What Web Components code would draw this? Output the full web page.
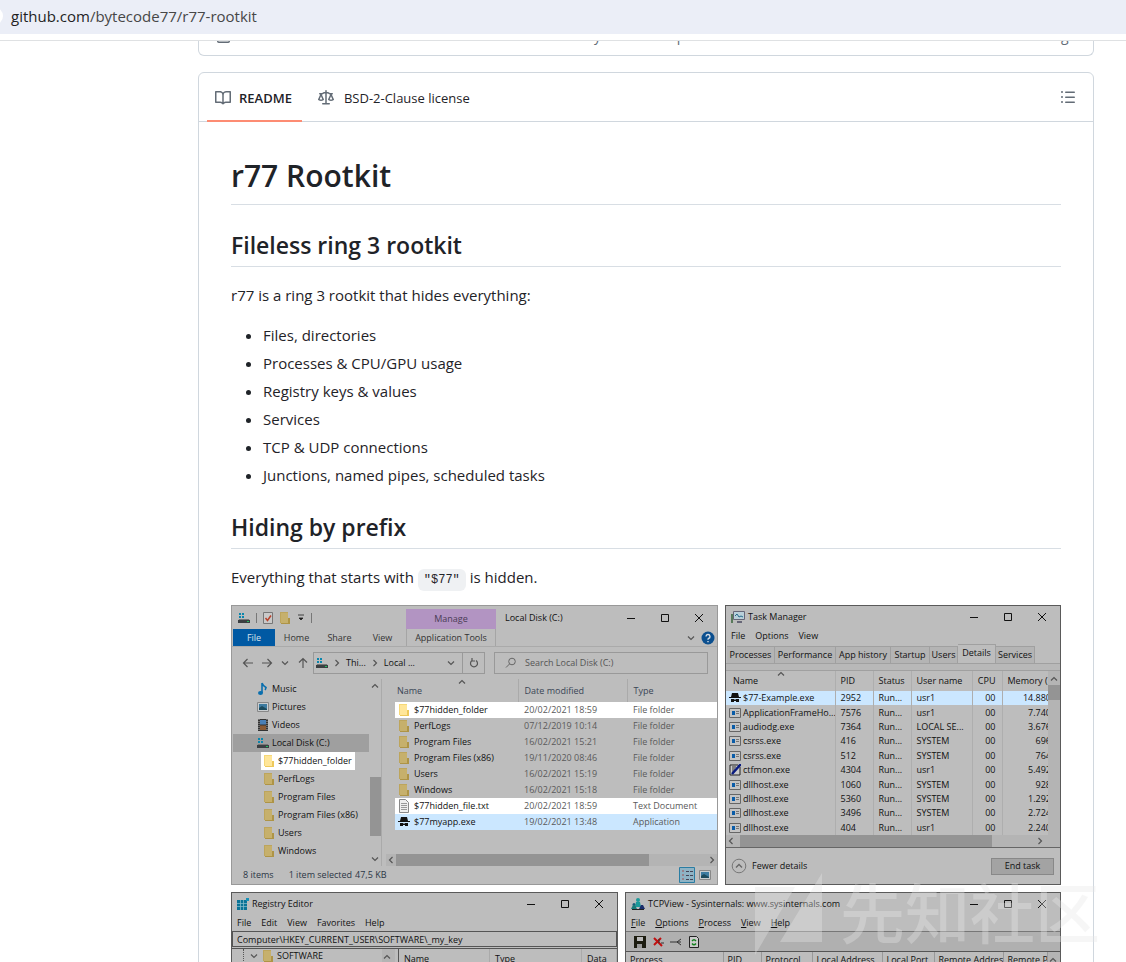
<!DOCTYPE html>
<html lang="en">
<head>
<meta charset="utf-8">
<title>bytecode77/r77-rootkit</title>
<style>
  body { margin: 0; background: #fff; color: #1f2328; font-family: "Open Sans", "Noto Sans", sans-serif; }
</style>
</head>
<body>
<app-page></app-page>
<script>
const BASE = `
  *, *::before { box-sizing: border-box; }
  button, input { font: inherit; color: inherit; background: none; border: 0; padding: 0; margin: 0; min-width: 0; }
  button { cursor: pointer; white-space: nowrap; }
  a { color: inherit; text-decoration: none; }
  ui-icon { flex: none; }
  table { border-collapse: collapse; table-layout: fixed; }
  th, td { padding: 0; text-align: left; font-weight: 400; white-space: nowrap; overflow: hidden; }
`;
function define(name, css, html) {
  const tpl = document.createElement('template');
  tpl.innerHTML = `<style>${BASE}${css}</style>${html}`;
  customElements.define(name, class extends HTMLElement {
    constructor() {
      super();
      this.attachShadow({ mode: 'open' }).append(tpl.content.cloneNode(true));
    }
  });
}

const chev = d => `<path d="${d}" fill="none" stroke="#555" stroke-width="1.2"/>`;
const ICONS = {
  book: ['0 0 16 16', '<path fill="#636c76" d="M0 1.75A.75.75 0 0 1 .75 1h4.253c1.227 0 2.317.59 3 1.501A3.743 3.743 0 0 1 11.006 1h4.245a.75.75 0 0 1 .75.75v10.5a.75.75 0 0 1-.75.75h-4.507a2.25 2.25 0 0 0-1.591.659l-.622.621a.75.75 0 0 1-1.06 0l-.622-.621A2.25 2.25 0 0 0 5.258 13H.75a.75.75 0 0 1-.75-.75Zm7.251 10.324.004-5.073-.002-2.253A2.25 2.25 0 0 0 5.003 2.5H1.5v9h3.757a3.75 3.75 0 0 1 1.994.574ZM8.755 4.75l-.004 7.322a3.752 3.752 0 0 1 1.992-.572H14.5v-9h-3.495a2.25 2.25 0 0 0-2.25 2.25Z"/>'],
  law: ['0 0 16 16', '<path fill="#636c76" d="M8.75.75V2h.985c.304 0 .603.08.867.231l1.29.736c.038.022.08.033.124.033h2.234a.75.75 0 0 1 0 1.5h-.427l2.111 4.692a.75.75 0 0 1-.154.838l-.53-.53.529.531-.001.002-.002.002-.006.006-.006.005-.01.01-.045.04c-.21.176-.441.327-.686.45C14.556 10.78 13.88 11 13 11a4.498 4.498 0 0 1-2.023-.454 3.544 3.544 0 0 1-.686-.45l-.045-.04-.016-.015-.006-.006-.004-.004v-.001a.75.75 0 0 1-.154-.838L12.178 4.5h-.162c-.305 0-.604-.079-.868-.231l-1.29-.736a.245.245 0 0 0-.124-.033H8.75V13h2.5a.75.75 0 0 1 0 1.5h-6.5a.75.75 0 0 1 0-1.5h2.5V3.5h-.984a.245.245 0 0 0-.124.033l-1.289.737c-.265.15-.564.23-.869.23h-.162l2.112 4.692a.75.75 0 0 1-.154.838l-.53-.53.529.531-.001.002-.002.002-.006.006-.016.015-.045.04c-.21.176-.441.327-.686.45C4.556 10.78 3.88 11 3 11a4.498 4.498 0 0 1-2.023-.454 3.544 3.544 0 0 1-.686-.45l-.045-.04-.016-.015-.006-.006-.004-.004v-.001a.75.75 0 0 1-.154-.838L2.178 4.5H1.75a.75.75 0 0 1 0-1.5h2.234a.249.249 0 0 0 .125-.033l1.288-.737c.265-.15.564-.23.869-.23h.984V.75a.75.75 0 0 1 1.5 0Zm2.945 8.477c.285.135.718.273 1.305.273s1.02-.138 1.305-.273L13 6.327Zm-10 0c.285.135.718.273 1.305.273s1.02-.138 1.305-.273L3 6.327Z"/>'],
  list: ['0 0 16 16', '<path fill="#636c76" d="M5.75 2.5h8.5a.75.75 0 0 1 0 1.5h-8.5a.75.75 0 0 1 0-1.5Zm0 5h8.5a.75.75 0 0 1 0 1.5h-8.5a.75.75 0 0 1 0-1.5Zm0 5h8.5a.75.75 0 0 1 0 1.5h-8.5a.75.75 0 0 1 0-1.5ZM2 14a1 1 0 1 1 0-2 1 1 0 0 1 0 2Zm1-6a1 1 0 1 1-2 0 1 1 0 0 1 2 0ZM2 4a1 1 0 1 1 0-2 1 1 0 0 1 0 2Z"/>'],
  doc: ['0 0 16 16', '<path fill="#636c76" d="M2 1.750C2 .784 2.784 0 3.750 0h6.586c.464 0 .909.184 1.237.513l2.914 2.914c.329.328.513.773.513 1.237v9.586A1.75 1.75 0 0 1 13.25 16h-9.500A1.750 1.750 0 0 1 2 14.250Zm1.750-.25a.25.25 0 0 0-.25.25v12.500c0 .138.112.25.25.25h9.500a.25.25 0 0 0 .25-.25V6h-2.750A1.750 1.750 0 0 1 9 4.250V1.500Z"/>'],
  folder: ['0 0 12 14', '<path d="M1 1h8v11H1z" fill="#bda55c"/><path d="M2 2h7v10H2z" fill="#c6b06c"/><path d="M9 7h2v6H2v-1h7z" fill="#ae9446"/>'],
  folderlit: ['0 0 12 14', '<path d="M1 1h8v11H1z" fill="#f6d878"/><path d="M2 2h7v10H2z" fill="#ffe699"/><path d="M9 7h2v6H2v-1h7z" fill="#eec95a"/>'],
  disk: ['0 0 12 12', '<path d="M1 1h2v2H1zM4 1h2v2H4zM1 4h2v2H1zM4 4h2v2H4z" fill="#0a86ad"/><path d="M1 7h10l1 4H0z" fill="#777"/><path d="M0 8h12v3H0z" fill="#3b3f42"/><path d="M9 9h2v1H9z" fill="#24c060"/>'],
  check: ['0 0 10 12', '<path d="M.5.500h9v11h-9z" fill="#c9c9c9" stroke="#777"/><path d="M2.500 6l2 2.500L8 3.500" fill="none" stroke="#b8422c" stroke-width="1.500"/>'],
  qmenu: ['0 0 8 8', '<path d="M1 1h6M2 4h4L4 6z" stroke="#222" fill="#222" stroke-width=".8"/>'],
  min: ['0 0 10 10', '<path d="M1 5.500h8" stroke="#111"/>'],
  max: ['0 0 10 10', '<path d="M1.500 1.500h7v7h-7z" stroke="#111" fill="none"/>'],
  close: ['0 0 10 10', '<path d="M1 1l8 8M9 1l-8 8" stroke="#111"/>'],
  left: ['0 0 12 12', chev('M11 6H2M5.500 2L1.500 6l4 4')],
  right: ['0 0 12 12', chev('M1 6h9M6.500 2l4 4-4 4')],
  up: ['0 0 12 12', chev('M6 11V2M2 5.500l4-4 4 4')],
  cdown: ['0 0 10 10', chev('M2 3.500l3 3 3-3')],
  cup: ['0 0 10 10', chev('M2 6.500l3-3 3 3')],
  cright: ['0 0 10 10', chev('M3.500 2l3 3-3 3')],
  cleft: ['0 0 10 10', chev('M6.500 2l-3 3 3 3')],
  refresh: ['0 0 12 12', chev('M4 3.500a3.500 3.500 0 1 0 4 0M4 1v3h3')],
  search: ['0 0 12 12', '<circle cx="7" cy="4.500" r="3.300" fill="none" stroke="#666"/><path d="M4.500 7L1 10.500" stroke="#666"/>'],
  help: ['0 0 14 14', '<circle cx="7" cy="7" r="6.500" fill="#0b4f8f"/><path d="M5 5.500a2 2 0 1 1 2.500 2Q7 7.700 7 8.800M7 10v1.300" fill="none" stroke="#d5dde5" stroke-width="1.400"/>'],
  music: ['0 0 12 14', '<path d="M5 1v10M5 1q1 3 4 4.500-.5 2-1 2.500" fill="none" stroke="#0a6fae" stroke-width="1.600"/><ellipse cx="3.500" cy="11" rx="2.500" ry="2" fill="#0a6fae"/>'],
  picture: ['0 0 12 10', '<path d="M.5.500h11v9H.5z" fill="#c8cdd0" stroke="#888"/><path d="M2 2h8v6H2z" fill="#3d7ba0"/><path d="M2 6l3-2 5 3v1H2z" fill="#1c4a5c"/>'],
  video: ['0 0 12 12', '<path d="M1 0h10v12H1z" fill="#333"/><path d="M3 1h6v4.500H3z" fill="#4a7fb5"/><path d="M3 6.500h6V11H3z" fill="#8a5a34"/><path d="M2 0v12M10 0v12" stroke="#aaa" stroke-dasharray="1"/>'],
  text: ['0 0 12 14', '<path d="M1.500.500h6l3 3v10h-9z" fill="#eee" stroke="#888"/><path d="M3 4.500h6M3 6.500h6M3 8.500h6M3 10.500h6" stroke="#999"/>'],
  spy: ['0 0 12 10', '<path d="M3 0h6l1 4h2v1H0V4h2zM2 6h3.500v1h1V6H10v3H7V8H5v1H2z" fill="#111"/>'],
  exe: ['0 0 12 10', '<path d="M.5.500h11v9H.5z" fill="#c4c4c4" stroke="#666"/><path d="M3 3h3v4H3z" fill="#0a5ca8"/><path d="M7 3.500h3M7 5.500h3" stroke="#777"/>'],
  pen: ['0 0 12 12', '<path d="M1 1h8l2 2v8H1z" fill="#ccc" stroke="#222"/><path d="M3 3h4M3 5h3M3 7h2" stroke="#333"/><path d="M12 0L3 10" stroke="#0a1b80" stroke-width="2.500"/>'],
  details: ['0 0 16 16', '<path d="M.5.500h15v15H.5z" fill="#8fb3c4" stroke="#2a7da3"/><path d="M4 3v10" stroke="#a05050" stroke-dasharray="2"/><path d="M7 4.500h3M11 4.500h3M7 8.500h3M11 8.500h3M7 12.500h3M11 12.500h3" stroke="#445"/>'],
  monitor: ['0 0 14 12', '<path d="M2.500.500h11v8h-11z" fill="#b9d0da" stroke="#667"/><path d="M4 5l2-2 2 3 2-1 2 1" fill="none" stroke="#256a8a"/><path d="M6 10h5v2H6z" fill="#667"/><path d="M0 3h2v9H0z" fill="#587a5a"/>'],
  circleup: ['0 0 16 16', '<circle cx="8" cy="8" r="6.800" fill="none" stroke="#777"/><path d="M5 9.500l3-3 3 3" fill="none" stroke="#666" stroke-width="1.300"/>'],
  reg: ['0 0 12 12', '<path d="M0 2h10v10H0z" fill="#0a7396"/><path d="M3.500 2v10M6.500 2v10M0 5.500h10M0 8.500h10" stroke="#8cc0cf" stroke-width=".7"/><path d="M9 0h3v3H9z" fill="#1592b8"/>'],
  tcp: ['0 0 14 12', '<circle cx="7" cy="2" r="2" fill="#1c9a9a"/><path d="M5 4h4l1 5H4z" fill="#1c9a9a"/><circle cx="3" cy="6.500" r="1.500" fill="#1c5a7a"/><path d="M0 11l2-4h2l2 4z" fill="#1c7a7a"/><path d="M8 11l2-4h2l2 4z" fill="#1b2e6b"/><path d="M1 11h12v1H1z" fill="#222"/>'],
  save: ['0 0 12 12', '<path d="M0 0h12v12H0z" fill="#1c1c10"/><path d="M3 1h6v4H3z" fill="#bbb"/><path d="M3 8h5v4H3z" fill="#999"/>'],
  kill: ['0 0 12 12', '<path d="M2 2l8 8M9 2L2 9" stroke="#c01010" stroke-width="2"/><path d="M7 3v4M9 7h3" stroke="#333"/>'],
  conn: ['0 0 12 12', '<path d="M0 6h7M11 3L7 6l4 3M11 6H7" stroke="#333" fill="none"/>'],
  reload: ['0 0 12 12', '<path d="M1.500.500h7l2 2v9h-9z" fill="#ccc" stroke="#222"/><path d="M4 5q2-2.500 4 0M8 7.500q-2 2.500-4 0" fill="none" stroke="#11801c" stroke-width="1.400"/>'],
};
customElements.define('ui-icon', class extends HTMLElement {
  constructor() {
    super();
    this.attachShadow({ mode: 'open' });
  }
  connectedCallback() {
    const [box, body] = ICONS[this.getAttribute('name')];
    const [, , w, h] = box.split(' ').map(Number);
    this.shadowRoot.innerHTML = `<style>:host{display:block;width:${w}px;height:${h}px}svg{display:block;width:100%;height:100%}</style><svg viewBox="${box}" aria-hidden="true">${body}</svg>`;
  }
});
const icon = n => `<ui-icon name="${n}"></ui-icon>`;

/* ---------- browser and repository parts ---------- */
define('url-bar', `
  :host { display: block; flex: none; border-bottom: 1px solid #dfe1e3; padding-bottom: 6px; }
  .bar { display: flex; align-items: center; height: 34px; background: #ebeef7; font-size: 15px; line-height: 20px; color: #474747; overflow: hidden; padding-bottom: 2px; }
  .bar::before { content: ""; width: 18px; height: 18px; margin-left: -15px; margin-right: 8px; border-radius: 9px; background: #fff; }
  b { font-weight: 400; color: #1f1f1f; }
`, `<div class="bar"><span><b>github.com</b>/bytecode77/r77-rootkit</span></div>`);

define('file-row', `
  :host { display: flex; align-items: flex-end; height: 15px; overflow: hidden; border: 1px solid #d0d7de; border-top: 0; border-radius: 0 0 6px 6px; }
  .row { display: grid; grid-template-columns: 326px 1fr 136px; align-items: center; width: 100%; height: 40px; padding: 0 16px; font-size: 14px; color: #636c76; }
  .row > :last-child { text-align: right; }
`, `<div class="row">${icon('doc')}<a href="#">Directory structure updated</a><span>2 months ago</span></div>`);

define('readme-tabs', `
  :host { display: flex; align-items: center; height: 49px; padding: 0 17px 0 8px; border-bottom: 1px solid #d0d7de; font-size: 13px; }
  a { display: flex; align-items: center; gap: 8px; height: 49px; padding: 0 10px 0 8px; margin-bottom: -1px; }
  a + a { gap: 10px; margin-left: 8px; }
  .on { font-weight: 600; border-bottom: 2px solid #fd8c73; padding-top: 2px; }
  .toc { margin-left: auto; }
`, `<a class="on" href="#readme">${icon('book')}README</a><a href="#license">${icon('law')}BSD-2-Clause license</a><button class="toc" aria-label="Outline">${icon('list')}</button>`);

define('readme-body', `
  :host { display: block; padding: 32px; font-size: 15px; line-height: 24px; }
  h1, h2 { margin: 0 0 16px; font-weight: 600; border-bottom: 1px solid #d8dee4; }
  h1 { font-size: 30px; line-height: 43px; padding-bottom: 7px; margin-bottom: 24px; }
  h2 { font-size: 23px; line-height: 32px; padding-bottom: 5px; }
  p { margin: 0 0 16px; }
  ul { margin: 0 0 24px; padding-left: 32px; }
  li + li { margin-top: 4px; }
  code { font: 12px/14px "Liberation Mono", monospace; padding: 4px 6px; background: #eff1f3; border-radius: 6px; }
  .shots { display: grid; gap: 7px; margin-bottom: 7px; }
  .one { grid-template-columns: 487fr 336fr; }
  .two { grid-template-columns: 387fr 436fr; }
`, `
  <h1>r77 Rootkit</h1>
  <h2>Fileless ring 3 rootkit</h2>
  <p>r77 is a ring 3 rootkit that hides everything:</p>
  <ul><li>Files, directories</li><li>Processes &amp; CPU/GPU usage</li><li>Registry keys &amp; values</li><li>Services</li><li>TCP &amp; UDP connections</li><li>Junctions, named pipes, scheduled tasks</li></ul>
  <h2>Hiding by prefix</h2>
  <p>Everything that starts with <code>"$77"</code> is hidden.</p>
  <div class="shots one"><explorer-window></explorer-window><task-window></task-window></div>
  <div class="shots two"><registry-window></registry-window><tcp-window></tcp-window></div>`);

/* ---------- desktop windows ---------- */
define('win-controls', `
  :host { display: flex; flex: none; margin-left: auto; padding-right: 1px; }
  button { width: 34px; height: 20px; display: grid; place-items: center; }
`, `<button aria-label="Minimize">${icon('min')}</button><button aria-label="Maximize">${icon('max')}</button><button aria-label="Close">${icon('close')}</button>`);

const WIN = `
  :host { display: block; min-width: 0; overflow: hidden; border: 1px solid #5a5a5a; background: #bdbdbd; color: #111; font-size: 9px; line-height: 12px; }
  .menu { display: flex; align-items: center; height: 16px; gap: 10px; padding-left: 5px; }
  .thumb { background: #949494; }
  .c { display: flex; align-items: center; gap: 4px; }
  .sort { position: relative; }
  .sort ui-icon { position: absolute; top: -3px; left: 50%; }
`;
define('win-title', `
  :host { display: flex; align-items: center; height: 22px; gap: 3px; padding-left: 5px; }
`, `<slot></slot><win-controls></win-controls>`);

const tree = [['music', 'Music'], ['picture', 'Pictures'], ['video', 'Videos'], ['disk', 'Local Disk (C:)', 'sel'], ['folderlit', '$77hidden_folder', 'sub lit'], ['folder', 'PerfLogs', 'sub'], ['folder', 'Program Files', 'sub'], ['folder', 'Program Files (x86)', 'sub'], ['folder', 'Users', 'sub'], ['folder', 'Windows', 'sub']];
const files = [['folderlit', '$77hidden_folder', '20/02/2021 18:59', 'File folder', 'lit'], ['folder', 'PerfLogs', '07/12/2019 10:14', 'File folder'], ['folder', 'Program Files', '16/02/2021 15:21', 'File folder'], ['folder', 'Program Files (x86)', '19/11/2020 08:46', 'File folder'], ['folder', 'Users', '16/02/2021 15:19', 'File folder'], ['folder', 'Windows', '16/02/2021 15:18', 'File folder'], ['text', '$77hidden_file.txt', '20/02/2021 18:59', 'Text Document', 'lit'], ['spy', '$77myapp.exe', '19/02/2021 13:48', 'Application', 'blue']];
define('explorer-window', WIN + `
  :host { border-color: #999; }
  .head { display: flex; height: 23px; align-items: center; }
  .qa { width: 174px; display: flex; align-items: center; gap: 6px; padding: 0 6px; }
  .qa i { width: 1px; height: 10px; background: #777; }
  .manage { width: 90px; align-self: stretch; margin-top: 3px; background: #b294c2; color: #4a3b55; display: grid; place-items: center; }
  .head > span { margin-left: 9px; }
  .ribbon { display: flex; align-items: stretch; height: 18px; border-bottom: 1px solid #aaa; color: #333; }
  .ribbon button { width: 43px; }
  .ribbon .file { width: 42px; background: #0059a3; color: #d8e2ec; margin-left: 1px; }
  .ribbon .tools { width: 90px; margin-left: 2px; border: solid #a5a5a5; border-width: 0 1px; }
  .ribbon .end { margin-left: auto; display: flex; align-items: center; gap: 5px; padding-right: 2px; }
  .addr { display: flex; align-items: center; height: 32px; padding: 0 9px 0 10px; }
  .nav { display: flex; align-items: center; width: 71px; gap: 7px; }
  .path { display: flex; align-items: center; width: 172px; height: 22px; border: 1px solid #999; padding-left: 2px; gap: 4px; }
  .path .re { width: 22px; height: 20px; border-left: 1px solid #999; display: grid; place-items: center; }
  .path .drop { margin-left: auto; margin-right: 2px; }
  label.box { display: flex; align-items: center; flex: 1; margin-left: 9px; height: 22px; border: 1px solid #999; padding-left: 10px; gap: 8px; min-width: 0; }
  input { flex: 1; color: #555; }
  input::placeholder { color: #555; opacity: 1; }
  .panes { display: flex; height: 187px; overflow: hidden; }
  .tree { width: 136px; margin: 0 0 0 1px; flex: none; list-style: none; padding: 1px 0 0; overflow: hidden; }
  .tree li { display: flex; align-items: center; height: 18px; padding-left: 24px; gap: 3px; }
  .tree li.sub { padding-left: 30px; }
  .tree li.sel { background: #9f9f9f; }
  .tree li.lit { background: #fff; margin-left: 28px; width: 94px; padding-left: 2px; }
  .vs { width: 13px; display: flex; flex-direction: column; align-items: center; border-right: 1px solid #aaa; padding: 2px 0; flex: none; }
  .vs .thumb { width: 11px; height: 59px; margin-top: auto; margin-bottom: 18px; }
  .list { flex: 1; min-width: 0; display: flex; flex-direction: column; padding-left: 4px; }
  table { width: calc(100% - 9px); margin-left: 9px; }
  th { height: 23px; color: #3a4656; border-right: 1px solid #aaa; padding-left: 6px; }
  th:first-child { padding-left: 2px; }
  th:last-child, td { border-right: 0; }
  td { height: 16px; color: #5a5a5a; padding-left: 6px; }
  td:first-child { padding-left: 3px; color: #111; }
  .lit td { background: #fff; }
  .blue td { background: #cbe7ff; }
  .sort ui-icon { top: -8px; }
  .hs { margin-top: auto; display: flex; align-items: center; height: 12px; background: #b4b4b4; }
  .hs .thumb { width: 253px; height: 12px; margin-right: auto; }
  .status { display: flex; align-items: center; height: 18px; padding: 0 6px 0 11px; gap: 15px; color: #2b3645; }
  .status span:last-of-type { margin-left: -12px; }
  .status div { margin-left: auto; display: flex; align-items: center; gap: 4px; }
`, `
  <div class="head"><div class="qa">${icon('disk')}<i></i>${icon('check')}${icon('folder')}${icon('qmenu')}<i></i></div><div class="manage">Manage</div><span>Local Disk (C:)</span><win-controls></win-controls></div>
  <div class="ribbon"><button class="file">File</button><button>Home</button><button>Share</button><button>View</button><button class="tools">Application Tools</button><div class="end">${icon('cdown')}${icon('help')}</div></div>
  <div class="addr"><div class="nav">${icon('left')}${icon('right')}${icon('cdown')}${icon('up')}</div>
    <div class="path">${icon('disk')}${icon('cright')}<span>Thi...</span>${icon('cright')}<span>Local ...</span><button class="drop" aria-label="Previous locations">${icon('cdown')}</button><button class="re" aria-label="Refresh">${icon('refresh')}</button></div>
    <label class="box">${icon('search')}<input type="text" placeholder="Search Local Disk (C:)" aria-label="Search Local Disk (C:)"></label></div>
  <div class="panes"><ul class="tree">${tree.map(([i, t, c]) => `<li class="${c || ''}">${icon(i)}${t}</li>`).join('')}</ul>
    <div class="vs">${icon('cup')}<div class="thumb"></div>${icon('cdown')}</div>
    <div class="list"><table><colgroup><col style="width:123px"><col style="width:109px"><col></colgroup><thead><tr><th style="overflow:visible"><div class="sort">Name${icon('cup')}</div></th><th>Date modified</th><th>Type</th></tr></thead><tbody>${files.map(([i, n, d, t, c]) => `<tr class="${c || ''}"><td><div class="c">${icon(i)}${n}</div></td><td>${d}</td><td>${t}</td></tr>`).join('')}</tbody></table>
      <div class="hs">${icon('cleft')}<div class="thumb"></div>${icon('cright')}</div></div></div>
  <div class="status"><span>8 items</span><span>1 item selected</span><span>47,5 KB</span><div>${icon('details')}${icon('picture')}</div></div>`);

const procs = [['spy', '$77-Example.exe', 2952, 'usr1', '14.880'], ['exe', 'ApplicationFrameHo...', 7576, 'usr1', '7.740'], ['exe', 'audiodg.exe', 7364, 'LOCAL SE...', '3.676'], ['exe', 'csrss.exe', 416, 'SYSTEM', '696'], ['exe', 'csrss.exe', 512, 'SYSTEM', '764'], ['pen', 'ctfmon.exe', 4304, 'usr1', '5.492'], ['exe', 'dllhost.exe', 1060, 'SYSTEM', '928'], ['exe', 'dllhost.exe', 5360, 'SYSTEM', '1.292'], ['exe', 'dllhost.exe', 3496, 'SYSTEM', '2.724'], ['exe', 'dllhost.exe', 404, 'usr1', '2.240']];
define('task-window', WIN + `
  .tabs { display: flex; align-items: flex-end; height: 19px; padding-left: 1px; }
  .tabs button { height: 17px; background: #b4b4b4; border: solid #a0a0a0; border-width: 1px 1px 0 0; text-align: center; }
  .tabs .on { height: 19px; background: #bdbdbd; padding-bottom: 3px; }
  .band { height: 8px; border: solid #a0a0a0; border-width: 1px 0; background: #b8b8b8; }
  .area { display: flex; height: 164px; }
  .clip { flex: 1; min-width: 0; overflow: hidden; }
  table { width: 100%; height: 164px; }
  thead tr { height: 20px; }
  th, td { border-right: 1px solid #aeaeae; padding-left: 5px; }
  th:first-child { padding-left: 7px; overflow: visible; }
  td:first-child { padding-left: 3px; }
  td:nth-child(5), th:nth-child(5) { text-align: right; padding-right: 6px; }
  th:last-child, td:last-child { border: 0; }
  td:last-child div { text-align: right; margin-right: -3px; }
  .sort ui-icon { top: -6px; left: 42%; }
  .c { gap: 2px; }
  .on td { background: #cbe7ff; }
  .vs { width: 12px; background: #b4b4b4; flex: none; display: flex; flex-direction: column; align-items: center; padding-top: 3px; }
  .vs .thumb { width: 12px; height: 15px; margin-top: 1px; }
  .hs { display: flex; align-items: center; height: 12px; background: #b4b4b4; padding-right: 15px; }
  .hs .thumb { width: 252px; height: 12px; margin: 0 auto 0 4px; }
  .foot { display: flex; align-items: center; height: 37px; border-top: 1px solid #666; padding: 0 6px 0 5px; gap: 5px; }
  .foot .end { margin-left: auto; width: 63px; height: 17px; background: #a3a3a3; border: 1px solid #888; }
`, `
  <win-title>${icon('monitor')}<span>Task Manager</span></win-title>
  <div class="menu"><button>File</button><button>Options</button><button>View</button></div>
  <div class="tabs">${[['Processes', 48], ['Performance', 61], ['App history', 55], ['Startup', 39], ['Users', 28], ['Details', 38], ['Services', 39]].map(([t, w]) => `<button class="${t === 'Details' ? 'on' : ''}" style="width:${w}px">${t}</button>`).join('')}</div>
  <div class="band"></div>
  <div class="area"><div class="clip"><table><colgroup><col style="width:109px"><col style="width:38px"><col style="width:38px"><col style="width:61px"><col style="width:30px"><col></colgroup>
    <thead><tr><th><div class="sort">Name${icon('cup')}</div></th><th>PID</th><th>Status</th><th>User name</th><th>CPU</th><th>Memory (</th></tr></thead>
    <tbody>${procs.map(([i, n, p, u, m], k) => `<tr class="${k ? '' : 'on'}"><td><div class="c">${icon(i)}${n}</div></td><td>${p}</td><td>Run...</td><td>${u}</td><td>00</td><td><div>${m}</div></td></tr>`).join('')}</tbody></table></div>
    <div class="vs">${icon('cup')}<div class="thumb"></div></div></div>
  <div class="hs">${icon('cleft')}<div class="thumb"></div>${icon('cright')}</div>
  <div class="foot">${icon('circleup')}<span>Fewer details</span><button class="end">End task</button></div>`);

define('registry-window', WIN + `
  input { display: block; width: 100%; height: 16px; border: 1px solid #555; padding-left: 4px; }
  .panes { display: flex; height: 180px; border-top: 1px solid #555; margin-top: 1px; }
  .left { width: 150px; flex: none; padding-left: 11px; }
  .left .row { display: flex; align-items: center; height: 14px; gap: 3px; border-left: 1px dotted #555; padding-left: 5px; }
  .left .lit { background: #fff; height: 14px; width: 94px; margin-left: 30px; }
  .vs { width: 13px; background: #b4b4b4; padding-top: 3px; margin-right: 3px; flex: none; }
  table { flex: 1; border-left: 1px solid #555; align-self: flex-start; }
  th { height: 19px; border-right: 1px solid #aaa; padding-left: 5px; }
`, `
  <win-title>${icon('reg')}<span>Registry Editor</span></win-title>
  <div class="menu"><button>File</button><button>Edit</button><button>View</button><button>Favorites</button><button>Help</button></div>
  <input type="text" aria-label="Key path" value="Computer\\HKEY_CURRENT_USER\\SOFTWARE\\_my_key">
  <div class="panes"><div class="left"><div class="row">${icon('cdown')}${icon('folder')}<span>SOFTWARE</span></div><div class="lit"></div></div><div class="vs">${icon('cup')}</div>
    <table><colgroup><col style="width:91px"><col style="width:92px"><col></colgroup><thead><tr><th>Name</th><th>Type</th><th>Data</th></tr></thead></table></div>`);

define('tcp-window', WIN + `
  .menu button::first-letter { text-decoration: underline; }
  .bar { display: flex; align-items: center; height: 20px; gap: 6px; padding-left: 8px; background: #b0b0b0; border-top: 1px solid #777; }
  .wrap { display: flex; height: 176px; border-top: 1px solid #555; }
  table { flex: 1; align-self: flex-start; width: 0; }
  th { height: 16px; border-right: 1px solid #999; padding-left: 4px; }
  .vs { width: 12px; background: #b4b4b4; padding-top: 3px; flex: none; }
`, `
  <win-title>${icon('tcp')}<span>TCPView - Sysinternals: www.sysinternals.com</span></win-title>
  <div class="menu"><button>File</button><button>Options</button><button>Process</button><button>View</button><button>Help</button></div>
  <div class="bar">${icon('save')}${icon('kill')}${icon('conn')}${icon('reload')}</div>
  <div class="wrap"><table><colgroup><col style="width:97px"><col style="width:38px"><col style="width:51px"><col style="width:70px"><col style="width:52px"><col style="width:69px"><col></colgroup><thead><tr><th>Process</th><th>PID</th><th>Protocol</th><th>Local Address</th><th>Local Port</th><th>Remote Address</th><th>Remote Po</th></tr></thead></table><div class="vs">${icon('cup')}</div></div>`);

define('water-mark', `
  :host { position: absolute; right: 26px; bottom: 7px; display: flex; align-items: flex-end; pointer-events: none; color: #e8e8e8; opacity: .35; gap: 17px; }
  svg { display: block; width: 68px; height: 82px; }
  span { font: 500 65px/66px "Noto Sans CJK SC", sans-serif; padding-bottom: 12px; }
`, `<svg viewBox="0 0 68 82" aria-hidden="true"><path fill="currentColor" d="M0 14h40L0 82zM67 0v69H25z"/></svg><span lang="zh">先知社区</span>`);

define('app-page', `
  :host { display: flex; flex-direction: column; height: 100vh; position: relative; overflow: hidden; }
  main { flex: 1; min-height: 0; overflow-y: auto; scrollbar-width: none; padding: 0 32px 0 198px; }
  .card { margin-top: 16px; border: 1px solid #d0d7de; border-radius: 6px; }
`, `<url-bar></url-bar><main><file-row></file-row><div class="card"><readme-tabs></readme-tabs><readme-body></readme-body></div></main><water-mark></water-mark>`);
</script>
</body>
</html>
